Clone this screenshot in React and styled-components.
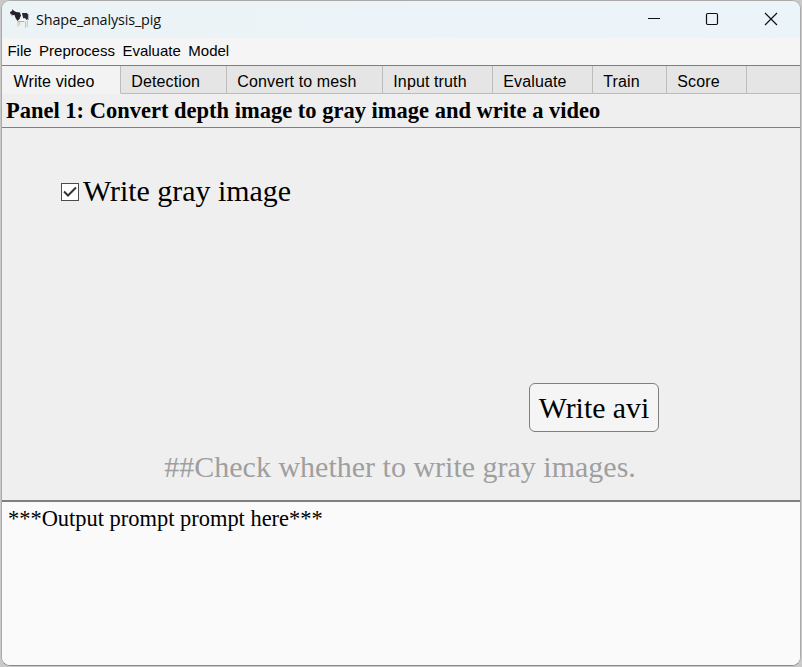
import React from "react";
import styled, { createGlobalStyle } from "styled-components";

const GlobalStyle = createGlobalStyle`
  * { box-sizing: border-box; }
  body { margin: 0; background: #c9c9c9; overflow: hidden; }
`;

const Frame = styled.main`
  width: 802px;
  height: 667px;
  padding: 0 1px 1px;
  background: #c9c9c9;
`;

const Window = styled.div`
  width: 800px;
  height: 666px;
  display: flex;
  flex-direction: column;
  overflow: hidden;
  background: #efefef;
  border: 1px solid #aaa;
  border-bottom-color: #8a8a8a;
  border-radius: 9px;
`;

const TitleBar = styled.header`
  flex: 0 0 37px;
  display: flex;
  align-items: center;
  padding-left: 7px;
  background: linear-gradient(90deg, #ebf3f7, #ebf4f9);
`;

const CowIcon = styled.svg`
  width: 22px;
  height: 22px;
  margin-top: -1px;
`;

const Title = styled.h1`
  flex: 1;
  margin: 1px 0 0 5px;
  font: 400 14.4px/20px "Open Sans", "Noto Sans", sans-serif;
  letter-spacing: -0.14px;
  color: #111;
`;

const WindowButton = styled.button`
  width: 58.5px;
  height: 37px;
  display: grid;
  place-items: center;
  padding: 0 0 1px;
  border: 0;
  background: transparent;
  color: #111;
`;

const MenuBar = styled.nav`
  flex: 0 0 27px;
  display: flex;
  gap: 7.5px;
  padding-left: 5.4px;
  background: #f5f5f5;
  font: 15px/26px "Liberation Sans", Arial, sans-serif;
  color: #000;
`;

const TabBar = styled.div`
  flex: 0 0 29px;
  display: flex;
  border-top: 1px solid #7f7f7f;
  background: #efefef;
`;

const Tab = styled.button`
  flex: 0 0 ${(p) => p.$width}px;
  padding: 4px 0 0 ${(p) => (p.$active ? 11.5 : 10.3)}px;
  border: 0;
  border-right: 1px solid #bcbcbc;
  border-bottom: 1px solid ${(p) => (p.$active ? "#f3f3f3" : "#bcbcbc")};
  background: ${(p) => (p.$active ? "#f3f3f3" : "#e5e5e5")};
  font: 16px/23px "Liberation Sans", Arial, sans-serif;
  letter-spacing: 0.12px;
  color: #000;
  text-align: left;
  white-space: nowrap;
`;

const TabFiller = styled.div`
  flex: 1;
  background: #e5e5e5;
  border-bottom: 1px solid #bcbcbc;
`;

const PanelHeading = styled.h2`
  flex: 0 0 34px;
  margin: 0;
  padding: 1px 0 0 4px;
  border-bottom: 1px solid #7f7f7f;
  font: 700 22.5px/32px "Liberation Serif", "Times New Roman", serif;
  color: #000;
  white-space: nowrap;
`;

const Panel = styled.section`
  flex: 0 0 372px;
  display: flex;
  flex-direction: column;
  font: 29.9px/34px "Liberation Serif", "Times New Roman", serif;
  color: #000;
`;

const CheckRow = styled.label`
  display: flex;
  align-items: center;
  gap: 4px;
  height: 34px;
  margin: 47px 0 0 59px;
`;

const CheckLabel = styled.span`
  padding-bottom: 2px;
`;

const CheckBox = styled.span`
  width: 18px;
  height: 18px;
  display: grid;
  place-items: center;
  border: 1px solid #4c4c4c;
  background: #fff;
`;

const WriteButton = styled.button`
  width: 130px;
  height: 49px;
  margin: 174px 0 0 527px;
  padding: 0;
  border: 1px solid #7f7f7f;
  border-radius: 6px;
  background: #f5f5f5;
  font: 29.8px/34px "Liberation Serif", "Times New Roman", serif;
  color: #000;
`;

const Hint = styled.p`
  margin: 18px 0 0 162.3px;
  font-size: 30px;
  color: #9f9f9f;
  white-space: nowrap;
`;

const Output = styled.section`
  flex: 1;
  padding: 4px 6px;
  border: solid #7f7f7f;
  border-width: 2px 0 0;
  background: #fafafa;
  font: 22.45px/26px "Liberation Serif", "Times New Roman", serif;
  color: #000;
`;

const menus = ["File", "Preprocess", "Evaluate", "Model"];

const tabs = [
  { label: "Write video", width: 119 },
  { label: "Detection", width: 106 },
  { label: "Convert to mesh", width: 156 },
  { label: "Input truth", width: 110 },
  { label: "Evaluate", width: 100 },
  { label: "Train", width: 74 },
  { label: "Score", width: 80 },
];

function Cow() {
  return (
    <CowIcon viewBox="0 0 22 22" aria-hidden="true">
      <path d="M7 5h11l1.5 2v5l-2 2-9-.5L6 9z" fill="#faf6f0" />
      <path d="M1 4l2-1 .5-2 1 1.5L7 4l4 .5 1 3-1.5 3.5-2 2L6.5 10 5.5 7 3 7 1.5 6z" fill="#202228" />
      <path d="M1.5 6.3L4.5 7 4 8.3H2.4z" fill="#c4b4a8" />
      <path d="M13 5h5l1 1.5V11l-1.5 1-1.5-2-1.5.5-1-2z" fill="#222a3c" />
      <path d="M12 5.5l1 3-1 1.5" fill="none" stroke="#faf6f0" strokeWidth="1" />
      <path d="M9 13v5.5M10.7 13.5V17M16.5 13.5V20M18.3 12V19" fill="none" stroke="#d3c1ab" strokeWidth="1" />
      <path d="M9 13.5h6.5" stroke="#d8a468" strokeWidth="1.1" />
      <path d="M19.3 6v6" stroke="#6e7078" strokeWidth="0.6" />
    </CowIcon>
  );
}

export default function App() {
  return (
    <>
      <GlobalStyle />
      <Frame>
        <Window>
          <TitleBar>
            <Cow />
            <Title>Shape_analysis_pig</Title>
            <WindowButton aria-label="Minimize">
              <svg width="14" height="14"><path d="M1 6.5h12" stroke="currentColor" /></svg>
            </WindowButton>
            <WindowButton aria-label="Maximize">
              <svg width="14" height="14"><rect x="1.5" y="1.5" width="11" height="11" rx="1.2" fill="none" stroke="currentColor" strokeWidth="1.2" /></svg>
            </WindowButton>
            <WindowButton aria-label="Close">
              <svg width="14" height="14"><path d="M1 1l12 12M13 1L1 13" stroke="currentColor" strokeWidth="1.2" /></svg>
            </WindowButton>
          </TitleBar>
          <MenuBar>
            {menus.map((menu) => <span key={menu}>{menu}</span>)}
          </MenuBar>
          <TabBar>
            {tabs.map((tab, i) => (
              <Tab key={tab.label} $width={tab.width} $active={i === 0}>{tab.label}</Tab>
            ))}
            <TabFiller />
          </TabBar>
          <PanelHeading>Panel 1: Convert depth image to gray image and write a video</PanelHeading>
          <Panel>
            <CheckRow>
              <CheckBox>
                <svg width="14" height="12"><path d="M1 5.5l4 4L13 1.5" fill="none" stroke="#333" strokeWidth="2" /></svg>
              </CheckBox>
              <CheckLabel>Write gray image</CheckLabel>
            </CheckRow>
            <WriteButton>Write avi</WriteButton>
            <Hint>##Check whether to write gray images.</Hint>
          </Panel>
          <Output>***Output prompt prompt here***</Output>
        </Window>
      </Frame>
    </>
  );
}
